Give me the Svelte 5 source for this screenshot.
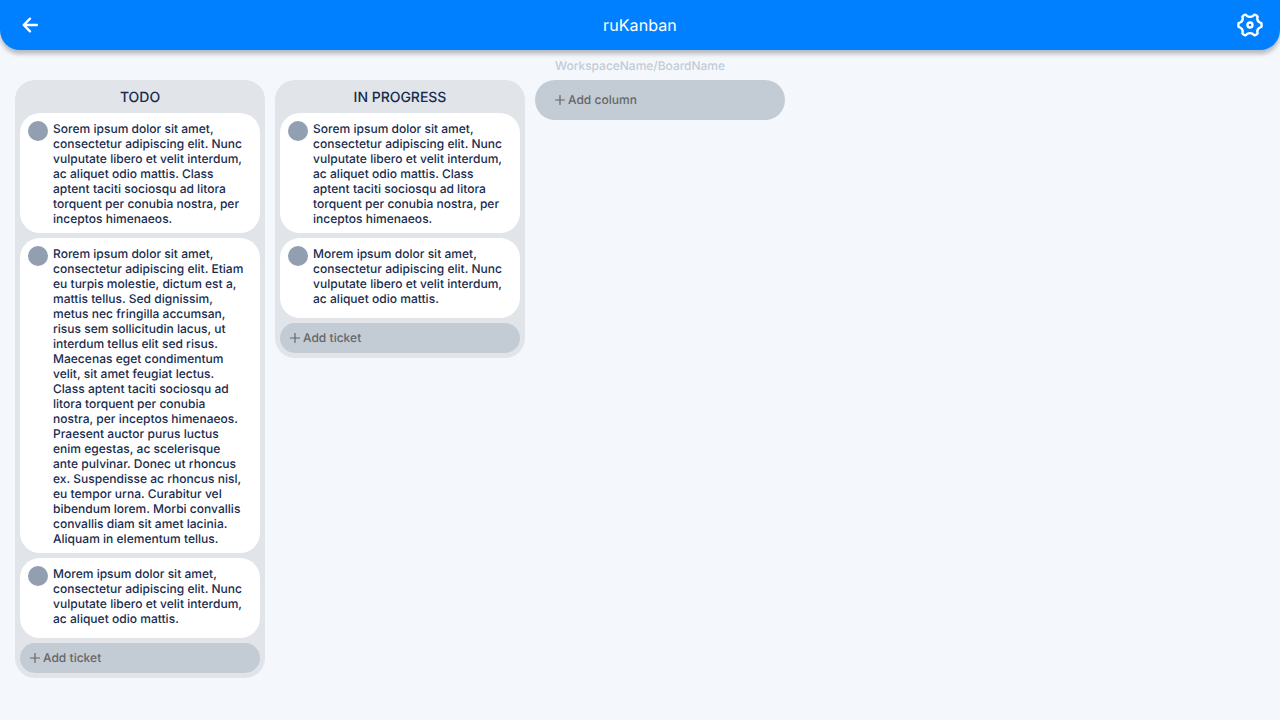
<script>
  const sorem = ['Sorem ipsum dolor sit amet,', 'consectetur adipiscing elit. Nunc', 'vulputate libero et velit interdum,', 'ac aliquet odio mattis. Class', 'aptent taciti sociosqu ad litora', 'torquent per conubia nostra, per', 'inceptos himenaeos.'].join('\n');
  const rorem = ['Rorem ipsum dolor sit amet,', 'consectetur adipiscing elit. Etiam', 'eu turpis molestie, dictum est a,', 'mattis tellus. Sed dignissim,', 'metus nec fringilla accumsan,', 'risus sem sollicitudin lacus, ut', 'interdum tellus elit sed risus.', 'Maecenas eget condimentum', 'velit, sit amet feugiat lectus.', 'Class aptent taciti sociosqu ad', 'litora torquent per conubia', 'nostra, per inceptos himenaeos.', 'Praesent auctor purus luctus', 'enim egestas, ac scelerisque', 'ante pulvinar. Donec ut rhoncus', 'ex. Suspendisse ac rhoncus nisl,', 'eu tempor urna. Curabitur vel', 'bibendum lorem. Morbi convallis', 'convallis diam sit amet lacinia.', 'Aliquam in elementum tellus.'].join('\n');
  const morem = ['Morem ipsum dolor sit amet,', 'consectetur adipiscing elit. Nunc', 'vulputate libero et velit interdum,', 'ac aliquet odio mattis.'].join('\n');
  const columns = [
    { title: 'TODO', tickets: [sorem, rorem, morem] },
    { title: 'IN PROGRESS', tickets: [sorem, morem] },
  ];
</script>

{#snippet plus()}
  <svg class="plus" width="10" height="10" viewBox="0 0 10 10"><path d="M5 0.5V9.5M0.5 5H9.5" /></svg>
{/snippet}

<div class="app">
  <header>
    <button aria-label="Back">
      <svg width="30" height="30" viewBox="0 0 30 30"><path d="M21.8 15H8.8M15 8.7L8.7 15L15 21.3" /></svg>
    </button>
    <h1>ruKanban</h1>
    <button aria-label="Settings">
      <svg width="30" height="30" viewBox="0 0 30 30">
        <path class="gear" d="M10.5 4.6L12 5.9Q15 7.8 18 5.9L19.5 4.6Q21.3 5.1 22.6 6.5L22.3 8.5Q22.3 11.3 24.9 12.5L26.4 13.1Q26.8 15 26.4 16.9L24.9 17.5Q22.3 18.7 22.3 21.5L22.6 23.5Q21.3 24.9 19.5 25.4L18 24.1Q15 22.2 12 24.1L10.5 25.4Q8.7 24.9 7.4 23.5L7.7 21.5Q7.7 18.7 5.1 17.5L3.6 16.9Q3.2 15 3.6 13.1L5.1 12.5Q7.7 11.3 7.7 8.5L7.4 6.5Q8.7 5.1 10.5 4.6Z" />
        <circle class="gear" cx="15" cy="15" r="2.5" />
      </svg>
    </button>
  </header>
  <div class="path">WorkspaceName/BoardName</div>
  <main>
    {#each columns as column}
      <section>
        <h2>{column.title}</h2>
        {#each column.tickets as ticket}
          <article><span class="avatar"></span><p>{ticket}</p></article>
        {/each}
        <button class="add">{@render plus()}<span>Add ticket</span></button>
      </section>
    {/each}
    <button class="add add-column">{@render plus()}<span>Add column</span></button>
  </main>
</div>

<style>
  :global(body) { margin: 0; background: #f4f8fd; }
  .app { height: 720px; overflow: hidden; font-family: Inter, sans-serif; font-size: 12px; font-weight: 460; letter-spacing: 0.02px; color: #172b4d; background: #f4f8fd; text-rendering: geometricPrecision; }
  button { border: 0; padding: 0; background: none; font: inherit; letter-spacing: inherit; display: flex; align-items: center; text-rendering: inherit; }
  header { height: 50px; box-sizing: border-box; padding: 0 15px; display: flex; align-items: center; justify-content: space-between; background: #007fff; border-radius: 0 0 20px 20px; box-shadow: 0 4px 4px rgba(0, 0, 0, 0.25); }
  header svg { fill: none; stroke: #fff; stroke-width: 2.4; stroke-linecap: round; stroke-linejoin: round; }
  h1 { margin: 0; font-size: 16px; font-weight: 400; letter-spacing: 0.1px; line-height: 20px; color: #fff; }
  .path { height: 30px; line-height: 31px; text-align: center; letter-spacing: -0.03px; color: #c3cbd5; }
  main { display: flex; align-items: flex-start; gap: 10px; padding: 0 15px; }
  section { width: 250px; box-sizing: border-box; padding: 0 5px 5px; display: flex; flex-direction: column; gap: 5px; background: #e1e4e9; border-radius: 20px; }
  h2 { margin: 0 0 -5px; height: 33px; line-height: 35px; font-size: 14px; font-weight: 460; letter-spacing: -0.02px; text-align: center; }
  article { display: flex; gap: 5px; box-sizing: border-box; min-height: 80px; padding: 8px 8px 7px; background: #fff; border-radius: 20px; }
  .avatar { flex: none; width: 20px; height: 20px; border-radius: 50%; background: #919fb1; }
  p { margin: 0; line-height: 15px; white-space: pre; }
  .add { height: 30px; padding: 0 10px; gap: 3px; background: #c3cbd5; border-radius: 20px; color: #666; }
  .add span { line-height: 14px; padding-bottom: 1px; }
  .add-column { width: 250px; height: 40px; padding: 0 20px; }
  .plus { fill: none; stroke: currentColor; stroke-width: 1.2; stroke-linecap: round; }
</style>
